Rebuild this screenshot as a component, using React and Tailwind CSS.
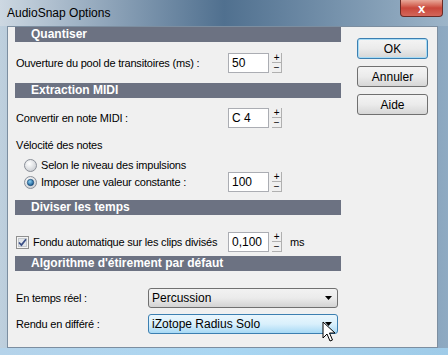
import React from 'react';

const font = { fontFamily: '"Liberation Sans", Arial, sans-serif' };

const Header = ({ children }) => (
    <div className="h-[15px] bg-[#6c7282] pl-[16px] text-[12px] font-bold leading-[15px] tracking-normal text-white">{children}</div>
);

const Spin = () => (
    <div className="ml-[3px] flex h-[20px] w-[10px] flex-col">
        <div className="flex h-[10px] items-center justify-center border-b border-r border-[#b0b0b0] text-[10px] leading-none text-black">+</div>
        <div className="flex h-[10px] items-center justify-center border-b border-r border-[#b0b0b0] text-[10px] leading-none text-black">−</div>
    </div>
);

const NumField = ({ value }) => (
    <div className="flex items-center">
        <div className="flex h-[20px] w-[41px] items-center border border-[#abadb3] bg-white pl-[3px] text-[12px] tracking-normal text-black">{value}</div>
        <Spin />
    </div>
);

const Radio = ({ checked }) => (
    <svg width="13" height="13" viewBox="0 0 13 13" className="shrink-0">
        <defs>
            <radialGradient id={checked ? 'rg1' : 'rg0'} cx="40%" cy="35%" r="70%">
                <stop offset="0" stopColor="#ffffff" />
                <stop offset="1" stopColor="#c9ccd1" />
            </radialGradient>
            <radialGradient id="dot" cx="40%" cy="35%" r="70%">
                <stop offset="0" stopColor="#8ad0f5" />
                <stop offset="1" stopColor="#0f4f86" />
            </radialGradient>
        </defs>
        <circle cx="6.5" cy="6.5" r="6" fill={`url(#${checked ? 'rg1' : 'rg0'})`} stroke="#8a8f98" />
        {checked && <circle cx="6.5" cy="6.5" r="3.2" fill="url(#dot)" stroke="#0b3c6a" strokeWidth="0.6" />}
    </svg>
);

const Button = ({ children, focused }) => (
    <div
        className={`flex h-[21px] w-[71px] items-center justify-center rounded-[3px] border bg-gradient-to-b from-[#f4f4f4] via-[#ebebeb] to-[#d6d6d6] text-[12px] text-black ${
            focused ? 'border-[#3c7fb1] shadow-[inset_0_0_0_1px_#a7dcf6]' : 'border-[#707070]'
        }`}
    >
        {children}
    </div>
);

const Select = ({ children, hover }) => (
    <div
        className={`flex h-[20px] w-[190px] items-center justify-between rounded-[3px] border pl-[3px] pr-[5px] text-[12px] tracking-normal text-black ${
            hover
                ? 'border-[#3c7fb1] bg-gradient-to-b from-[#eaf6fd] via-[#d9f0fc] to-[#a7d9f5]'
                : 'border-[#707070] bg-gradient-to-b from-[#f2f2f2] via-[#ebebeb] to-[#d3d3d3]'
        }`}
    >
        <span>{children}</span>
        <svg width="7" height="4" viewBox="0 0 7 4">
            <path d="M0 0h7L3.5 4z" fill="#000" />
        </svg>
    </div>
);

export default function App() {
    return (
        <div
            className="relative h-[355px] w-[448px] overflow-hidden bg-gradient-to-r from-[#bfd0de] via-[#4d6b88] to-[#8faac2]"
            style={font}
        >
            <div className="flex h-[26px] items-center bg-gradient-to-r from-[#cdd8e2] via-[#50708f] to-[#9db5c9] pl-[7px] text-[12px] text-black">
                AudioSnap Options
            </div>
            <div className="absolute right-[5px] top-0 flex h-[17px] w-[43px] items-center justify-center rounded-b-[4px] border border-t-0 border-[#6b2a25] bg-gradient-to-b from-[#e8a89a] via-[#c9463a] to-[#d3665a] text-[13px] font-bold leading-none text-white">
                x
            </div>
            <div className="ml-[7px] flex h-[322px] w-[431px] border border-[#7c8ea0] bg-[#f0f0f0] pl-[7px]">
                <div className="flex w-[326px] flex-col whitespace-nowrap text-[11px] tracking-[-0.2px] text-black">
                    <Header>Quantiser</Header>
                    <div className="mt-[11px] flex items-center">
                        <span className="w-[213px] pl-[1px]">Ouverture du pool de transitoires (ms) :</span>
                        <NumField value="50" />
                    </div>
                    <div className="mt-[10px]">
                        <Header>Extraction MIDI</Header>
                    </div>
                    <div className="mt-[10px] flex items-center">
                        <span className="w-[213px] pl-[1px]">Convertir en note MIDI :</span>
                        <NumField value="C 4" />
                    </div>
                    <div className="mt-[10px] pl-[1px] leading-[14px]">Vélocité des notes</div>
                    <div className="mt-[6px] flex items-center gap-[4px] pl-[9px] leading-[14px]">
                        <Radio />
                        <span>Selon le niveau des impulsions</span>
                    </div>
                    <div className="mt-[0px] flex items-center">
                        <div className="flex w-[213px] items-center gap-[4px] pl-[9px]">
                            <Radio checked />
                            <span>Imposer une valeur constante :</span>
                        </div>
                        <NumField value="100" />
                    </div>
                    <div className="mt-[8px]">
                        <Header>Diviser les temps</Header>
                    </div>
                    <div className="mt-[17px] flex items-center">
                        <div className="flex w-[213px] items-center gap-[4px] pl-[1px]">
                            <svg width="13" height="13" viewBox="0 0 13 13" className="shrink-0">
                                <rect x="0.5" y="0.5" width="12" height="12" fill="#f4f4f4" stroke="#8f8f8f" />
                                <rect x="2.5" y="2.5" width="8" height="8" fill="#e2e6ea" stroke="#c5c9ce" />
                                <path d="M3 6.5l2.4 2.6L10 3.2" fill="none" stroke="#3b4f86" strokeWidth="1.7" />
                            </svg>
                            <span>Fondu automatique sur les clips divisés</span>
                        </div>
                        <NumField value="0,100" />
                        <span className="ml-[8px]">ms</span>
                    </div>
                    <div className="mt-[4px]">
                        <Header>Algorithme d'étirement par défaut</Header>
                    </div>
                    <div className="mt-[17px] flex items-center">
                        <span className="w-[133px] pl-[1px]">En temps réel :</span>
                        <Select>Percussion</Select>
                    </div>
                    <div className="mt-[6px] flex items-center">
                        <span className="w-[133px] pl-[1px]">Rendu en différé :</span>
                        <Select hover>iZotope Radius Solo</Select>
                    </div>
                </div>
                <div className="ml-[16px] mt-[11px] flex flex-col gap-[7px]">
                    <Button focused>OK</Button>
                    <Button>Annuler</Button>
                    <Button>Aide</Button>
                </div>
            </div>
            <div className="absolute bottom-0 left-0 h-[7px] w-full bg-gradient-to-r from-[#b5d3ea] via-[#a9d6f2] to-[#9fcbe8]" />
            <svg className="absolute left-[322px] top-[321px]" width="14" height="22" viewBox="0 0 14 22">
                <path d="M1 1v16l4-4 3 7 2.5-1-3-7h5.5z" fill="#fff" stroke="#000" strokeWidth="1" strokeLinejoin="round" />
            </svg>
        </div>
    );
}
